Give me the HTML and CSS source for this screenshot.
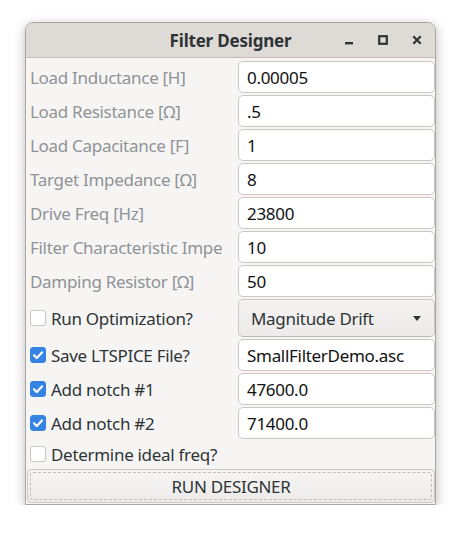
FILE: index.html
```html
<!DOCTYPE html>
<html>
<head>
<meta charset="utf-8">
<link rel="stylesheet" href="styles.css">
</head>
<body>
<div class="window">
  <div class="titlebar">
    <div class="title">Filter Designer</div>
    <div class="controls">
      <svg class="ctl" width="10" height="10" viewBox="0 0 10 10"><rect x="1" y="7" width="8" height="2.4" fill="#2e3436"/></svg>
      <svg class="ctl" width="10" height="10" viewBox="0 0 10 10"><rect x="1.2" y="1.2" width="7.6" height="7.6" fill="none" stroke="#2e3436" stroke-width="2.2"/></svg>
      <svg class="ctl" width="10" height="10" viewBox="0 0 10 10"><path d="M1.3 1.3 L8.7 8.7 M8.7 1.3 L1.3 8.7" stroke="#2e3436" stroke-width="2.2"/></svg>
    </div>
  </div>
  <div class="content">
    <div class="label dim">Load Inductance [H]</div>
    <div class="field">0.00005</div>
    <div class="label dim">Load Resistance [Ω]</div>
    <div class="field">.5</div>
    <div class="label dim">Load Capacitance [F]</div>
    <div class="field">1</div>
    <div class="label dim">Target Impedance [Ω]</div>
    <div class="field">8</div>
    <div class="label dim">Drive Freq [Hz]</div>
    <div class="field">23800</div>
    <div class="label dim"><span class="clipped">Filter Characteristic Impe</span></div>
    <div class="field">10</div>
    <div class="label dim">Damping Resistor [Ω]</div>
    <div class="field">50</div>

    <div class="check"><span class="box"></span>Run Optimization?</div>
    <div class="combo"><span>Magnitude Drift</span><span class="arrow"></span></div>

    <div class="check"><span class="box on"><svg width="16" height="16" viewBox="0 0 16 16"><path d="M4 8.2 L6.8 11 L12 5.4" fill="none" stroke="#fff" stroke-width="2.2" stroke-linecap="round" stroke-linejoin="round"/></svg></span>Save LTSPICE File?</div>
    <div class="field">SmallFilterDemo.asc</div>

    <div class="check"><span class="box on"><svg width="16" height="16" viewBox="0 0 16 16"><path d="M4 8.2 L6.8 11 L12 5.4" fill="none" stroke="#fff" stroke-width="2.2" stroke-linecap="round" stroke-linejoin="round"/></svg></span>Add notch #1</div>
    <div class="field">47600.0</div>

    <div class="check"><span class="box on"><svg width="16" height="16" viewBox="0 0 16 16"><path d="M4 8.2 L6.8 11 L12 5.4" fill="none" stroke="#fff" stroke-width="2.2" stroke-linecap="round" stroke-linejoin="round"/></svg></span>Add notch #2</div>
    <div class="field">71400.0</div>

    <div class="check span"><span class="box"></span>Determine ideal freq?</div>

    <div class="button span"><span>RUN DESIGNER</span></div>
  </div>
</div>
</body>
</html>
```

FILE: styles.css
```css
* { box-sizing: border-box; }
html, body { margin: 0; background: #ffffff; }
body {
  padding: 22px 25px 0 25px;
  font-family: "Noto Sans", "Open Sans", sans-serif;
  font-size: 17px;
  letter-spacing: -0.3px;
}
.window {
  width: 411px;
  height: 483px;
  border: 1px solid #aaa6a2;
  border-radius: 8px 8px 0 0;
  background: #f6f5f4;
  box-shadow: 0 3px 12px rgba(0,0,0,0.28);
  overflow: hidden;
}
.titlebar {
  height: 35px;
  background: #dedad6;
  border-bottom: 1px solid #c4bfba;
  display: flex;
  align-items: center;
  justify-content: center;
  position: relative;
}
.title {
  font-weight: bold;
  color: #2e3436;
  font-size: 17px;
  letter-spacing: -0.2px;
}
.controls {
  position: absolute;
  right: 13px;
  top: 12px;
  display: flex;
  gap: 24px;
}
.ctl { display: block; }
.content {
  display: grid;
  grid-template-columns: 211px 197px;
  grid-template-rows: repeat(7, 32px) 38px repeat(3, 32px) 26px 34px;
  row-gap: 2px;
  padding: 3px 0 0 1px;
}
.label {
  display: flex;
  align-items: center;
  padding-left: 3px;
  white-space: nowrap;
  overflow: hidden;
  width: 195px;
}
.dim { color: #8f9396; }
.field {
  background: #ffffff;
  border: 1px solid #cdc7c2;
  border-radius: 5px;
  display: flex;
  align-items: center;
  padding-left: 8px;
  color: #111111;
}
.check {
  display: flex;
  align-items: center;
  padding-left: 3px;
  color: #2e3436;
  white-space: nowrap;
}
.box {
  width: 16px;
  height: 16px;
  border: 1px solid #cdc7c2;
  border-radius: 3px;
  background: #ffffff;
  margin-right: 5px;
  flex: none;
  display: block;
}
.box.on {
  background: #3584e4;
  border-color: #3584e4;
  position: relative;
}
.box.on svg { position: absolute; left: -1px; top: -1px; }
.combo {
  background: linear-gradient(#f4f3f2, #ecebe9);
  border: 1px solid #cdc7c2;
  border-bottom-color: #bfb8b1;
  border-radius: 5px;
  display: flex;
  align-items: center;
  justify-content: space-between;
  padding: 0 13px 0 12px;
  color: #2e3436;
}
.arrow {
  width: 0; height: 0;
  border-left: 4px solid transparent;
  border-right: 4px solid transparent;
  border-top: 5px solid #2e3436;
}
.span { grid-column: 1 / -1; }
.button {
  background: linear-gradient(#f6f5f4, #edebe9);
  border: 1px solid #cdc7c2;
  border-radius: 4px;
  padding: 2px;
}
.button span {
  display: flex;
  align-items: center;
  justify-content: center;
  height: 100%;
  border: 1px dashed #c0bcb8;
  border-radius: 3px;
  color: #2e3436;
}
```
